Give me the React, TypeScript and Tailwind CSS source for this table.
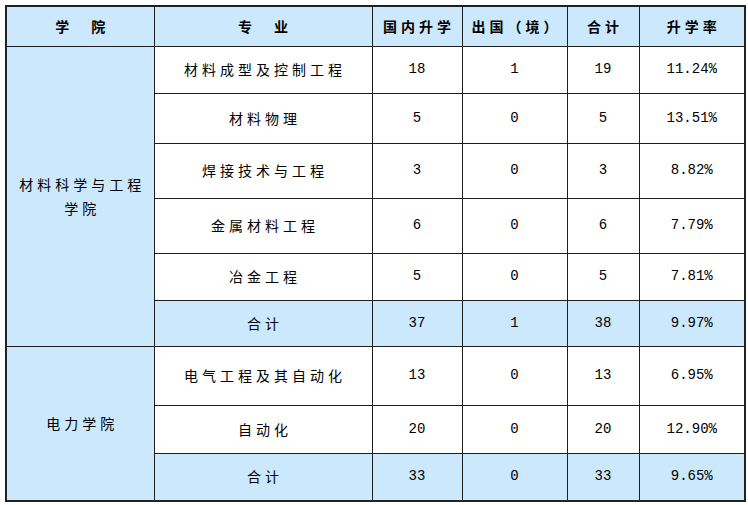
type Row = { major: string; domestic: number; abroad: number; total: number; rate: string; sub?: boolean; h: string };

const groups: { college: string[]; rows: Row[] }[] = [
  {
    college: ["材料科学与工程", "学院"],
    rows: [
      { major: "材料成型及控制工程", domestic: 18, abroad: 1, total: 19, rate: "11.24%", h: "h-[47px]" },
      { major: "材料物理", domestic: 5, abroad: 0, total: 5, rate: "13.51%", h: "h-[50px]" },
      { major: "焊接技术与工程", domestic: 3, abroad: 0, total: 3, rate: "8.82%", h: "h-[55px]" },
      { major: "金属材料工程", domestic: 6, abroad: 0, total: 6, rate: "7.79%", h: "h-[55px]" },
      { major: "冶金工程", domestic: 5, abroad: 0, total: 5, rate: "7.81%", h: "h-[47px]" },
      { major: "合计", domestic: 37, abroad: 1, total: 38, rate: "9.97%", sub: true, h: "h-[46px]" },
    ],
  },
  {
    college: ["电力学院"],
    rows: [
      { major: "电气工程及其自动化", domestic: 13, abroad: 0, total: 13, rate: "6.95%", h: "h-[59px]" },
      { major: "自动化", domestic: 20, abroad: 0, total: 20, rate: "12.90%", h: "h-[48px]" },
      { major: "合计", domestic: 33, abroad: 0, total: 33, rate: "9.65%", sub: true, h: "h-[47px]" },
    ],
  },
];

const cell = "border border-[#1f1f1f] text-center align-middle p-0";
const cjk = "font-['Noto_Sans_CJK_SC',sans-serif] text-[14px] tracking-[4px] pl-[4px]";
const num = "font-['Liberation_Mono',monospace] text-[14px]";

export default function App() {
  return (
    <div className="w-[748px] h-[505px] bg-white pt-[5px] pl-[5px] text-black">
      <div className="w-[741px] border-2 border-[#222]">
        <table className="w-full table-fixed border-collapse border-hidden">
          <colgroup>
            <col className="w-[147px]" />
            <col className="w-[218px]" />
            <col className="w-[90px]" />
            <col className="w-[105px]" />
            <col className="w-[72px]" />
            <col className="w-[105px]" />
          </colgroup>
          <thead>
            <tr className="h-[39px] bg-[#cce8fd] font-bold">
              <th className={`${cell} ${cjk}`}>学　院</th>
              <th className={`${cell} ${cjk}`}>专　业</th>
              <th className={`${cell} ${cjk}`}>国内升学</th>
              <th className={`${cell} ${cjk}`}>出国（境）</th>
              <th className={`${cell} ${cjk}`}>合计</th>
              <th className={`${cell} ${cjk}`}>升学率</th>
            </tr>
          </thead>
          <tbody>
            {groups.map((g) =>
              g.rows.map((r, i) => (
                <tr key={g.college[0] + i} className={`${r.h} ${r.sub ? "bg-[#cce8fd]" : "bg-white"}`}>
                  {i === 0 && (
                    <td rowSpan={g.rows.length} className={`${cell} ${cjk} bg-[#cce8fd] leading-[24px]`}>
                      {g.college.map((t) => (
                        <div key={t}>{t}</div>
                      ))}
                    </td>
                  )}
                  <td className={`${cell} ${cjk}`}>{r.major}</td>
                  <td className={`${cell} ${num}`}>{r.domestic}</td>
                  <td className={`${cell} ${num}`}>{r.abroad}</td>
                  <td className={`${cell} ${num}`}>{r.total}</td>
                  <td className={`${cell} ${num}`}>{r.rate}</td>
                </tr>
              ))
            )}
          </tbody>
        </table>
      </div>
    </div>
  );
}
